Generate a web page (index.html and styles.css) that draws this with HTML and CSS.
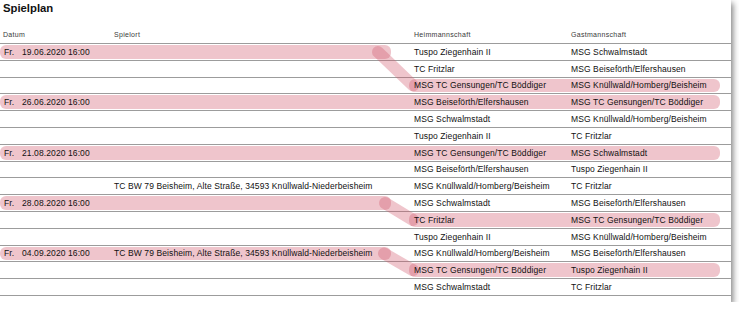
FILE: index.html
```html
<!DOCTYPE html>
<html lang="de">
<head>
<meta charset="utf-8">
<title>Spielplan</title>
<link rel="stylesheet" href="styles.css">
</head>
<body>
<div class="page">
  <h1 class="title">Spielplan</h1>
  <div class="table">
    <div class="row head">
      <div class="c1">Datum</div>
      <div class="c2">Spielort</div>
      <div class="c3">Heimmannschaft</div>
      <div class="c4">Gastmannschaft</div>
    </div>

    <div class="row"><div class="band band-date"></div>
      <div class="c1"><span class="day">Fr.</span>19.06.2020 16:00</div><div class="c2"></div>
      <div class="c3">Tuspo Ziegenhain II</div><div class="c4">MSG Schwalmstadt</div></div>
    <div class="row">
      <div class="c1"></div><div class="c2"></div>
      <div class="c3">TC Fritzlar</div><div class="c4">MSG Beiseförth/Elfershausen</div></div>
    <div class="row"><div class="band band-team"></div>
      <div class="c1"></div><div class="c2"></div>
      <div class="c3">MSG TC Gensungen/TC Böddiger</div><div class="c4">MSG Knüllwald/Homberg/Beisheim</div></div>
    <div class="row"><div class="band band-full"></div>
      <div class="c1"><span class="day">Fr.</span>26.06.2020 16:00</div><div class="c2"></div>
      <div class="c3">MSG Beiseförth/Elfershausen</div><div class="c4">MSG TC Gensungen/TC Böddiger</div></div>
    <div class="row">
      <div class="c1"></div><div class="c2"></div>
      <div class="c3">MSG Schwalmstadt</div><div class="c4">MSG Knüllwald/Homberg/Beisheim</div></div>
    <div class="row">
      <div class="c1"></div><div class="c2"></div>
      <div class="c3">Tuspo Ziegenhain II</div><div class="c4">TC Fritzlar</div></div>
    <div class="row"><div class="band band-full"></div>
      <div class="c1"><span class="day">Fr.</span>21.08.2020 16:00</div><div class="c2"></div>
      <div class="c3">MSG TC Gensungen/TC Böddiger</div><div class="c4">MSG Schwalmstadt</div></div>
    <div class="row">
      <div class="c1"></div><div class="c2"></div>
      <div class="c3">MSG Beiseförth/Elfershausen</div><div class="c4">Tuspo Ziegenhain II</div></div>
    <div class="row">
      <div class="c1"></div><div class="c2">TC BW 79 Beisheim, Alte Straße, 34593 Knüllwald-Niederbeisheim</div>
      <div class="c3">MSG Knüllwald/Homberg/Beisheim</div><div class="c4">TC Fritzlar</div></div>
    <div class="row"><div class="band band-date"></div>
      <div class="c1"><span class="day">Fr.</span>28.08.2020 16:00</div><div class="c2"></div>
      <div class="c3">MSG Schwalmstadt</div><div class="c4">MSG Beiseförth/Elfershausen</div></div>
    <div class="row"><div class="band band-team"></div>
      <div class="c1"></div><div class="c2"></div>
      <div class="c3">TC Fritzlar</div><div class="c4">MSG TC Gensungen/TC Böddiger</div></div>
    <div class="row">
      <div class="c1"></div><div class="c2"></div>
      <div class="c3">Tuspo Ziegenhain II</div><div class="c4">MSG Knüllwald/Homberg/Beisheim</div></div>
    <div class="row"><div class="band band-date"></div>
      <div class="c1"><span class="day">Fr.</span>04.09.2020 16:00</div><div class="c2">TC BW 79 Beisheim, Alte Straße, 34593 Knüllwald-Niederbeisheim</div>
      <div class="c3">MSG Knüllwald/Homberg/Beisheim</div><div class="c4">MSG Beiseförth/Elfershausen</div></div>
    <div class="row"><div class="band band-team"></div>
      <div class="c1"></div><div class="c2"></div>
      <div class="c3">MSG TC Gensungen/TC Böddiger</div><div class="c4">Tuspo Ziegenhain II</div></div>
    <div class="row">
      <div class="c1"></div><div class="c2"></div>
      <div class="c3">MSG Schwalmstadt</div><div class="c4">TC Fritzlar</div></div>
  </div>

  <svg class="links" width="731" height="302" viewBox="0 0 731 302" aria-hidden="true">
    <line x1="378" y1="52" x2="413" y2="85.5"/>
    <line x1="385" y1="203" x2="413" y2="220"/>
    <line x1="384" y1="253.5" x2="413" y2="270.3"/>
  </svg>
</div>
</body>
</html>
```

FILE: styles.css
```css
html, body {
  margin: 0;
  padding: 0;
  background: #ffffff;
}

.page {
  position: relative;
  width: 731px;
  height: 302px;
  background: #ffffff;
  box-shadow: 2px 3px 6px rgba(0, 0, 0, 0.5);
  font-family: "Liberation Sans", Arial, Helvetica, sans-serif;
  color: #111111;
}

.title {
  margin: 0;
  padding: 2px 0 0 3px;
  font-size: 11.3px;
  line-height: 13px;
  font-weight: bold;
  color: #111;
}

.table {
  margin-top: 12px;
}

.row {
  display: grid;
  grid-template-columns: 114px 300px 157px 160px;
  height: 16.8px;
  box-sizing: border-box;
  border-bottom: 1px solid #9c9c9c;
  align-items: center;
  font-size: 8.5px;
  letter-spacing: 0.1px;
  line-height: 10px;
}

.row.head {
  height: 17px;
  font-size: 7px;
  letter-spacing: 0.3px;
  color: #3a3a3a;
}

.c1, .c2, .c3, .c4 {
  grid-row: 1;
  position: relative;
  z-index: 2;
  white-space: nowrap;
}

.c1 { grid-column: 1; padding-left: 4px; }
.head .c1 { padding-left: 3px; }
.c2 { grid-column: 2; }
.c3 { grid-column: 3; }
.c4 { grid-column: 4; }

.day {
  display: inline-block;
  width: 18px;
}

.band {
  grid-row: 1;
  align-self: stretch;
  margin: 1px 0;
  background: rgba(210, 90, 110, 0.35);
  border-radius: 6px;
}

.band-date {
  grid-column: 1 / 3;
  margin-right: 23px;
}

.band-team {
  grid-column: 3 / 5;
  margin-left: -5px;
  margin-right: 11px;
}

.band-full {
  grid-column: 1 / 5;
  margin-right: 11px;
}

.links {
  position: absolute;
  left: 0;
  top: 0;
  z-index: 1;
  pointer-events: none;
}

.links line {
  stroke: rgba(210, 90, 110, 0.35);
  stroke-width: 12;
  stroke-linecap: round;
}
```
